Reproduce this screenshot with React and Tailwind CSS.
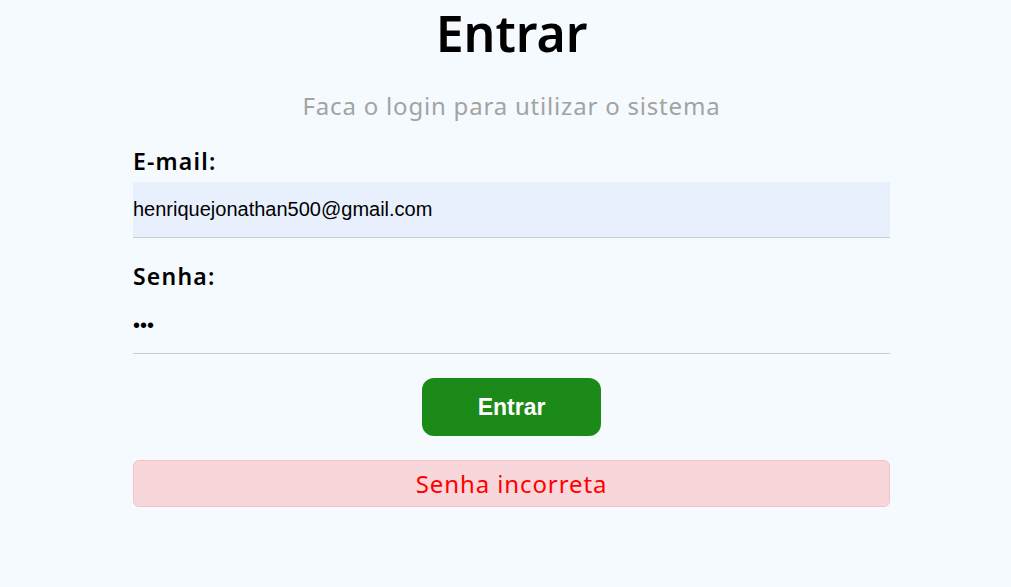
import React from "react";

export default function App() {
  return (
    <div className="min-h-[587px] w-full bg-[#f5faff] font-['Noto_Sans',sans-serif]">
      <div className="ml-[133px] flex w-[757px] flex-col">
        {/* TITLE */}
        <h1 className="pt-[1px] text-center text-[50px] font-semibold leading-[64px] text-black">
          Entrar
        </h1>
        <p className="mt-[25px] text-center text-[24px] leading-[32px] tracking-[0.8px] text-[#a3a3a3]">
          Faca o login para utilizar o sistema
        </p>

        {/* EMAIL */}
        <label className="mt-[24px] text-[23px] font-semibold leading-[30px] tracking-[1.2px] text-black">
          E-mail:
        </label>
        <input
          type="email"
          readOnly
          value="henriquejonathan500@gmail.com"
          className="mt-[6px] h-[56px] w-full border-b border-[#cccccc] bg-[#e8f0fe] font-['Liberation_Sans',Arial,sans-serif] text-[20px] text-black outline-none"
        />

        {/* PASSWORD */}
        <label className="mt-[23px] text-[23px] font-semibold leading-[30px] tracking-[1.2px] text-black">
          Senha:
        </label>
        <input
          type="password"
          readOnly
          value="abc"
          className="mt-[7px] h-[56px] w-full border-b border-[#cccccc] bg-transparent font-['Liberation_Sans',Arial,sans-serif] text-[20px] text-black outline-none"
        />

        {/* BUTTON */}
        <button className="mx-auto mt-[24px] h-[58px] w-[179px] rounded-[12px] bg-[#1b8a18] font-['Liberation_Sans',Arial,sans-serif] text-[23px] font-bold text-white">
          Entrar
        </button>

        {/* ERROR */}
        <div className="mt-[24px] flex h-[47px] items-center justify-center rounded-[6px] border border-[#f5c2c7] bg-[#f8d7da] text-[24px] tracking-[0.9px] text-[#ff0000]">
          Senha incorreta
        </div>
      </div>
    </div>
  );
}
